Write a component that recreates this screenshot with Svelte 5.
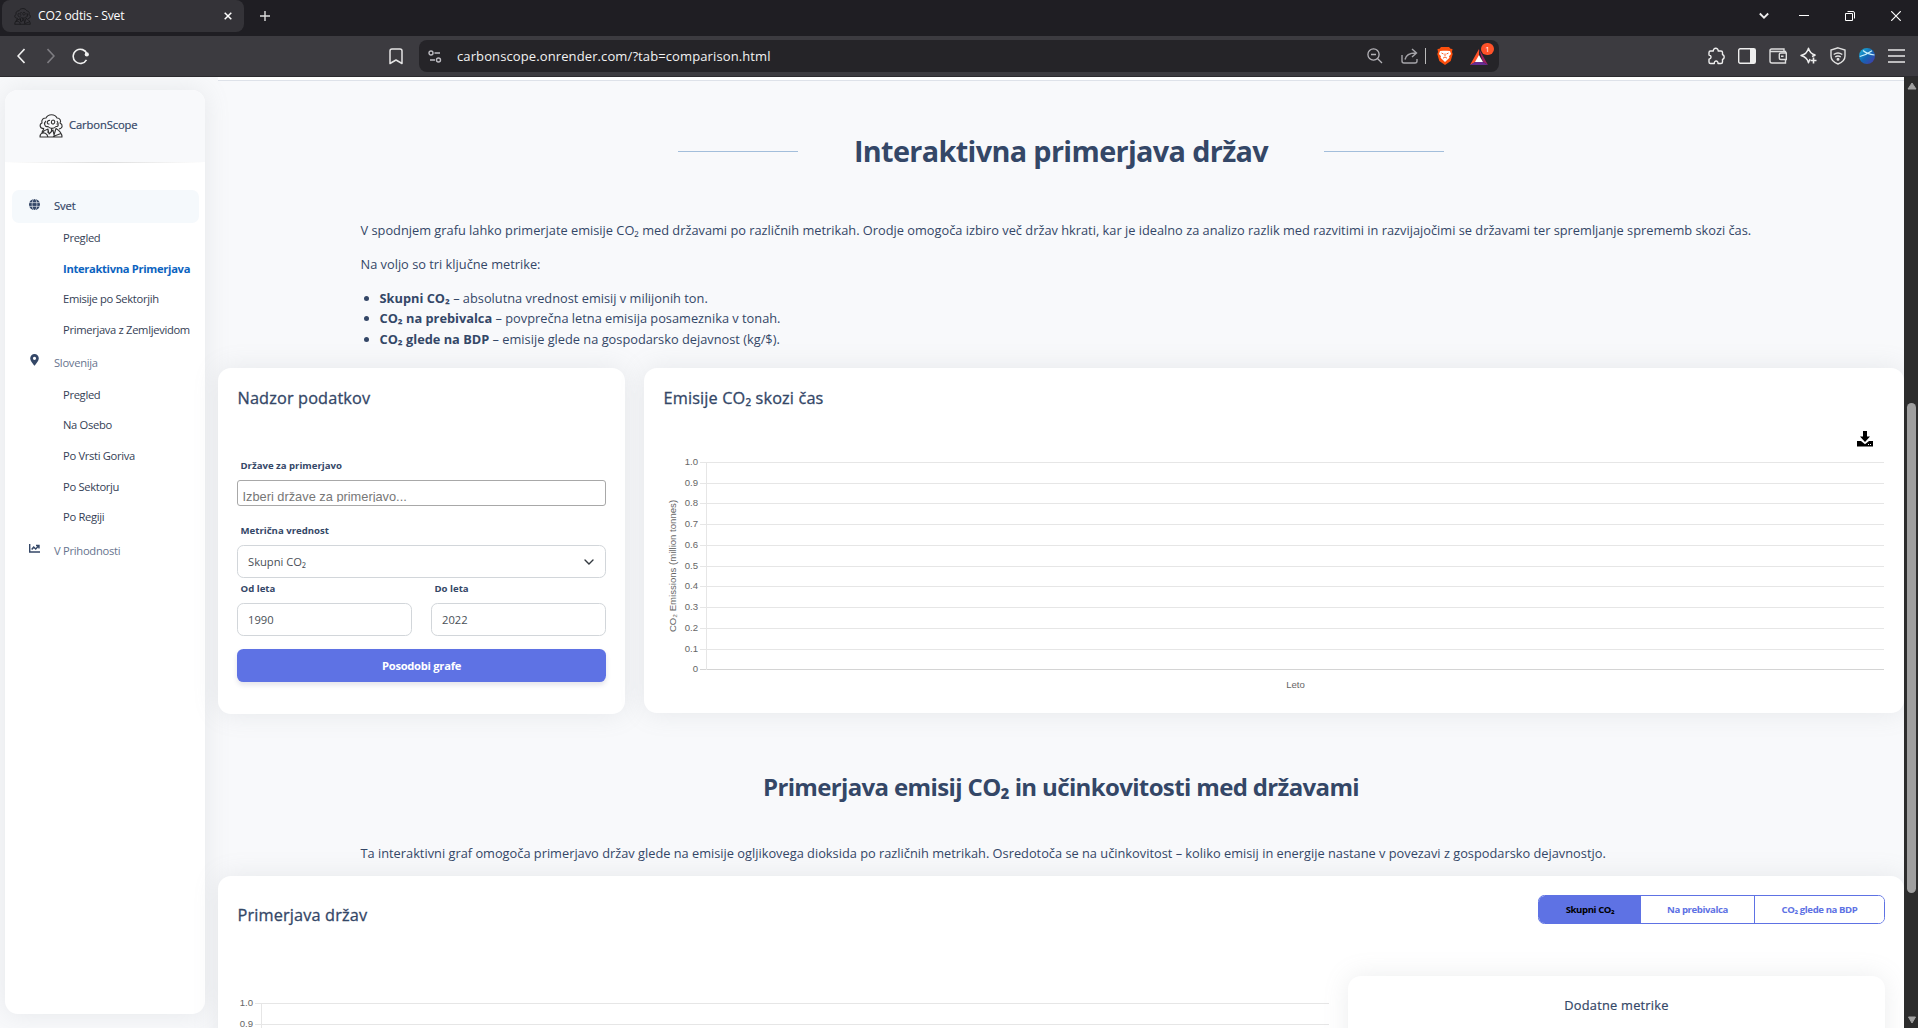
<script>
  const world = ['Pregled', 'Interaktivna Primerjava', 'Emisije po Sektorjih', 'Primerjava z Zemljevidom'];
  const slovenia = ['Pregled', 'Na Osebo', 'Po Vrsti Goriva', 'Po Sektorju', 'Po Regiji'];
  const ticks = [
    ['1.0', 462], ['0.9', 483], ['0.8', 503], ['0.7', 524], ['0.6', 545], ['0.5', 566],
    ['0.4', 586], ['0.3', 607], ['0.2', 628], ['0.1', 649], ['0', 669]
  ].map(([label, y]) => ({ label, y: y - 450 + 0.5 }));
  const ticks2 = [{ label: '1.0', y: 13.5 }, { label: '0.9', y: 34.5 }];
</script>

{#snippet mascot()}
  <g fill="none" stroke="currentColor" stroke-width="1.1" stroke-linejoin="round">
    <path d="M5 14.500C0 14.500 .500 10 3 9C2 5.500 4.500 4 7 4C9 -.300 16 -.300 18 4C21 4 22.500 7 21 9C24 10.500 24 14 20 15" />
    <path d="M7 7C4.500 9 5.500 13.500 9 12.500C11 15 15 15 17 12.500C19.500 13 20 10 18 7" />
    <path d="M11 6.500C8 5.500 7 10.500 10.500 10M14 6C11.500 6.500 12 10.500 14.500 10C16.500 9 16 6 14 6M17.500 10h1.500" />
    <path d="M1 23C1 19 4 17 9 15L10 20L14 16L15 21L17 14.500C21 17 23 19 23 23ZM2 19.500C5 18 8 19 9 23M5 14.500L3 18M9 15V19M12.500 14V18M22 19.500L14 22.500" />
  </g>
{/snippet}

<div class="window">
  <header class="tabs">
    <div class="tab">
      <svg class="favicon" width="17" height="17" viewBox="0 0 24 24">{@render mascot()}</svg>
      <span class="tab-title">CO2 odtis - Svet</span>
      <svg width="8" height="8" viewBox="0 0 8 8"><path d="M.7.7l6.6 6.6M7.3.7L.7 7.3" stroke="#fff" stroke-width="1.5" /></svg>
    </div>
    <svg class="plus" width="10" height="10" viewBox="0 0 10 10"><path d="M5 0v10M0 5h10" stroke="#ddd" stroke-width="1.4" /></svg>
    <div class="controls">
      <svg width="10" height="10" viewBox="0 0 10 10"><path d="M.8 2.5L5 6.7l4.2-4.2" fill="none" stroke="#eee" stroke-width="1.8" /></svg>
      <svg width="10" height="10" viewBox="0 0 10 10"><path d="M0 4.5h10" stroke="#fff" /></svg>
      <svg width="10" height="10" viewBox="0 0 10 10"><path d="M.5 2.5h7v7h-7zM2.5.5H8q1.5 0 1.5 1.5v5.5" fill="none" stroke="#fff" /></svg>
      <svg width="10" height="10" viewBox="0 0 10 10"><path d="M.2.2l9.6 9.6M9.8.2L.2 9.8" stroke="#fff" stroke-width="1.2" /></svg>
    </div>
  </header>

  <div class="toolbar">
    <div class="navbtns">
      <svg width="8" height="16" viewBox="0 0 8 16"><path d="M7.5 1L1 8l6.500 7" fill="none" stroke="#f0f0f0" stroke-width="1.6" /></svg>
      <svg width="8" height="16" viewBox="0 0 8 16"><path d="M.5 1L7 8l-6.500 7" fill="none" stroke="#7e7d82" stroke-width="1.6" /></svg>
      <svg width="18" height="17" viewBox="0 0 18 17"><path d="M14.500 11.800A7.100 7.100 0 1 1 15 6" fill="none" stroke="#f0f0f0" stroke-width="1.6" /><circle cx="14.800" cy="6.400" r="2.100" fill="#f0f0f0" /></svg>
    </div>
    <svg class="bookmark" width="14" height="17" viewBox="0 0 14 17"><path d="M1 3Q1 1 3 1h8q2 0 2 2v12.500L7 12 1 15.500z" fill="none" stroke="#e4e4e4" stroke-width="1.500" stroke-linejoin="round" /></svg>
    <div class="url">
      <svg width="14" height="13" viewBox="0 0 14 13" fill="none" stroke="#bdbcc2" stroke-width="1.400"><circle cx="3" cy="3" r="2" /><path d="M6.500 3H12M2 10h5" /><circle cx="10.500" cy="10" r="2" /></svg>
      <span class="address">carbonscope.onrender.com/?tab=comparison.html</span>
      <div class="urlicons">
        <svg width="16" height="16" viewBox="0 0 16 16" fill="none" stroke="#b4b3b8" stroke-width="1.300"><circle cx="6.500" cy="6.500" r="5.600" /><path d="M10.700 10.700L15 15M4 6.500h5" /></svg>
        <svg width="17" height="16" viewBox="0 0 17 16" fill="none" stroke="#a5a4a9" stroke-width="1.400"><path d="M1 7v6q0 2 2 2h11q2 0 2-2v-2M4 11.500C5 7 8 5 14.500 5M11 1l4.500 4L11 9" /></svg>
        <i class="sep"></i>
        <svg width="16" height="18" viewBox="0 0 16 18"><path d="M4 0h8l1.500 1.800L15.500 2 15 5l.700 2-2 7L8 18 2.300 14 .300 7 1 5 .500 2l2-.200z" fill="#fb4f0d" /><path d="M3 4L6 3.700h4l3 .3 1 3-2 2.300.5 1.500L8 15l-4.500-4.200L4 9.300l-2-2.300z" fill="#fff" /><path d="M4.500 6l2 1M11.500 6l-2 1M8 6.500v2.500M6 11.200L8 10l2 1.200" fill="none" stroke="#fb4f0d" stroke-width=".9" /></svg>
        <div class="rewards">
          <svg width="18" height="16" viewBox="0 0 18 16"><path d="M9 0L0 16l9-5z" fill="#ff5229" /><path d="M9 0l9 16-5-3z" fill="#9e1f63" /><path d="M0 16h18l-5-3H5z" fill="#662d91" /><path d="M9 6l4 7H5z" fill="#fff" /></svg>
          <b class="badge">1</b>
        </div>
      </div>
    </div>
    <div class="extras">
      <svg width="18" height="18" viewBox="0 0 18 18" fill="none" stroke="#eee" stroke-width="1.400" stroke-linejoin="round"><path d="M3.500 4H6.300C6 .300 11.500 .300 11.200 4H14q1.500 0 1.500 1.500V7.500c2.300 1 2.300 4 0 5V15q0 1.500-1.500 1.500H11c.300-3.300-4-3.300-3.700 0H3.500Q2 16.500 2 15V12.200c2.800-.700 2.800-3.700 0-4.200V5.500Q2 4 3.500 4z" /></svg>
      <svg width="18" height="16" viewBox="0 0 18 16"><rect x=".7" y=".7" width="16.600" height="14.600" rx="1.500" fill="none" stroke="#eee" stroke-width="1.400" /><path d="M12 1h5v14h-5z" fill="#eee" /></svg>
      <svg width="18" height="16" viewBox="0 0 18 16" fill="none" stroke="#ddd" stroke-width="1.400"><path d="M16.500 5V3.500H2.500C.500 3.500.500 1 2.500 1H15v2.500M1 2.500V13q0 2 2 2h13.500v-3.500" /><path d="M17.300 5v6.500h-5.500q-1.500 0-1.500-1.500V6.500Q10.300 5 11.800 5zM12 8.300h2.500" /></svg>
      <svg width="18" height="18" viewBox="0 0 18 18" fill="none" stroke="#eee" stroke-width="1.400" stroke-linejoin="round"><path d="M15.500 8Q10 7 8.500 1.200Q7 7 1 8.500Q7 10 8.500 15.800L10 12M15.500 8L12 9.500" /><path d="M13.500 10.500v6M10.500 13.500h6" stroke-width="1.600" /></svg>
      <svg width="16" height="18" viewBox="0 0 16 18" fill="none" stroke="#e0e0e0" stroke-width="1.400"><path d="M8 .8l7 2.200v6c0 4-3 6.500-7 8-4-1.500-7-4-7-8V3z" /><path d="M3.700 7.500q4.300-3 8.600 0M5.200 10q2.800-2 5.600 0" /><circle cx="8" cy="12.300" r=".8" /></svg>
      <svg width="16" height="16" viewBox="0 0 16 16"><defs><linearGradient id="orb" x1="0" y1="0" x2="1" y2="1"><stop offset="0" stop-color="#20b8dc" /><stop offset=".5" stop-color="#1267b4" /><stop offset="1" stop-color="#4a35a8" /></linearGradient></defs><circle cx="8" cy="8" r="8" fill="url(#orb)" /><path d="M.8 8.500Q7 7 13 2.800M4 2.500Q8 6 15.500 7" fill="none" stroke="#c9f0fa" stroke-width="1.200" /></svg>
      <svg width="17" height="14" viewBox="0 0 17 14"><path d="M0 1h17M0 7h17M0 13h17" stroke="#e8e8e8" stroke-width="1.500" /></svg>
    </div>
  </div>

  <div class="viewport">
    <aside class="side-col">
      <nav class="sidebar">
        <div class="brand">
          <svg class="logo" width="24" height="24" viewBox="0 0 24 24">{@render mascot()}</svg>
          <span>CarbonScope</span>
        </div>
        <div class="rule"></div>
        <div class="item active">
          <svg width="11" height="11" viewBox="0 0 11 11"><circle cx="5.500" cy="5.500" r="5.500" fill="#344767" /><path d="M0 3.600h11M0 7.400h11" stroke="#f6f9fc" stroke-width=".6" /><ellipse cx="5.500" cy="5.500" rx="2.400" ry="5.800" fill="none" stroke="#f6f9fc" stroke-width=".6" /></svg>
          <span>Svet</span>
        </div>
        <ul class="sub">
          {#each world as entry, i}<li class:current={i === 1}>{entry}</li>{/each}
        </ul>
        <div class="item">
          <svg width="11" height="12" viewBox="0 0 11 12"><path fill-rule="evenodd" d="M5.500 0a4.300 4.300 0 0 1 4.300 4.300C9.800 7 6.500 10.500 5.500 11.800 4.500 10.500 1.200 7 1.200 4.300A4.300 4.300 0 0 1 5.500 0zm0 2.700a1.600 1.600 0 1 0 0 3.200 1.600 1.600 0 0 0 0-3.200z" fill="#344767" /></svg>
          <span>Slovenija</span>
        </div>
        <ul class="sub second-list">
          {#each slovenia as entry}<li>{entry}</li>{/each}
        </ul>
        <div class="item">
          <svg width="11" height="9" viewBox="0 0 11 9" fill="none" stroke="#344767" stroke-width="1.400"><path d="M.7 0v8H11" /><path d="M2.700 5.500L4.700 3l2 2L9.500 2M7 1.500h3v3" /></svg>
          <span>V Prihodnosti</span>
        </div>
      </nav>
    </aside>

    <main>
      <div class="topline"></div>
      <div class="heading"><i></i><h2>Interaktivna primerjava držav</h2><i></i></div>
      <div class="prose intro">
        <p>V spodnjem grafu lahko primerjate emisije CO₂ med državami po različnih metrikah. Orodje omogoča izbiro več držav hkrati, kar je idealno za analizo razlik med razvitimi in razvijajočimi se državami ter spremljanje sprememb skozi čas.</p>
        <p>Na voljo so tri ključne metrike:</p>
        <ul>
          <li><b>Skupni CO₂</b> – absolutna vrednost emisij v milijonih ton.</li>
          <li><b>CO₂ na prebivalca</b> – povprečna letna emisija posameznika v tonah.</li>
          <li><b>CO₂ glede na BDP</b> – emisije glede na gospodarsko dejavnost (kg/$).</li>
        </ul>
      </div>

      <div class="row">
        <section class="card form">
          <h5>Nadzor podatkov</h5>
          <label class="first" for="countries">Države za primerjavo</label>
          <div class="multi" id="countries"><span>Izberi države za primerjavo...</span></div>
          <label class="second" for="metric">Metrična vrednost</label>
          <div class="field" id="metric"><span>Skupni CO₂</span>
            <svg width="10" height="6" viewBox="0 0 10 6"><path d="M1 1l4 4 4-4" fill="none" stroke="#343a40" stroke-width="1.400" stroke-linecap="round" /></svg>
          </div>
          <div class="years">
            <div><label for="from">Od leta</label><div class="field" id="from">1990</div></div>
            <div><label for="to">Do leta</label><div class="field" id="to">2022</div></div>
          </div>
          <button class="update">Posodobi grafe</button>
        </section>

        <section class="card chart">
          <h5>Emisije CO₂ skozi čas</h5>
          <svg class="download" width="16" height="16" viewBox="0 0 16 16"><path d="M6 0h4v5.500h3L8 11 3 5.500h3z" /><path d="M0 10h4l4 3.300L12 10h4v5.500H0z" /><path d="M11 13.500h1M13 13.500h1" stroke="#fff" /></svg>
          <svg class="plot" width="1222" height="244" viewBox="0 0 1222 244">
            {#each ticks as t}
              <path d="M37 {t.y}H1221" stroke={t.label === '0' ? '#d4d4d4' : '#e6e6e6'} />
              <text x="35" y={t.y + 2.800} text-anchor="end">{t.label}</text>
            {/each}
            <path d="M43.500 12v208" stroke="#e6e6e6" />
            <text class="axis" transform="translate(12.500 116) rotate(-90)" text-anchor="middle">CO₂ Emissions (million tonnes)</text>
            <text class="axis" x="632.500" y="237.500" text-anchor="middle">Leto</text>
          </svg>
        </section>
      </div>

      <h3>Primerjava emisij CO₂ in učinkovitosti med državami</h3>
      <div class="prose second-text">
        <p>Ta interaktivni graf omogoča primerjavo držav glede na emisije ogljikovega dioksida po različnih metrikah. Osredotoča se na učinkovitost – koliko emisij in energije nastane v povezavi z gospodarsko dejavnostjo.</p>
      </div>

      <section class="card compare">
        <div class="compare-head">
          <h5>Primerjava držav</h5>
          <div class="group">
            <button class="on">Skupni CO₂</button>
            <button>Na prebivalca</button>
            <button>CO₂ glede na BDP</button>
          </div>
        </div>
        <div class="compare-body">
          <svg class="plot" width="1093" height="38" viewBox="0 0 1093 38">
            {#each ticks2 as t}
              <path d="M18 {t.y}H1092" stroke="#e6e6e6" />
              <text x="16" y={t.y + 2.800} text-anchor="end">{t.label}</text>
            {/each}
            <path d="M24.500 13v25" stroke="#e6e6e6" />
          </svg>
          <div class="card metrics"><h6>Dodatne metrike</h6></div>
        </div>
      </section>
    </main>

    <div class="scrollbar">
      <svg width="10" height="8" viewBox="0 0 10 8"><path d="M5 1L9 7H1z" fill="#a0a0a0" stroke="#a0a0a0" stroke-linejoin="round" /></svg>
      <div class="thumb"></div>
      <svg class="down" width="10" height="8" viewBox="0 0 10 8"><path d="M5 7L1.500 1h7z" fill="#a0a0a0" stroke="#a0a0a0" stroke-linejoin="round" /></svg>
    </div>
  </div>
</div>

<style>
  :global(body) { margin: 0; overflow: hidden; }
  * { box-sizing: border-box; }
  svg { display: block; flex: none; }
  h2, h3, h5, h6, p, ul { margin: 0; padding: 0; }
  .window { width: 1918px; height: 1028px; overflow: hidden; display: flex; flex-direction: column; font-family: 'Open Sans', sans-serif; color: #344767; white-space: nowrap; }

  .tabs { height: 36px; flex: none; background: #1f1e23; display: flex; align-items: flex-start; padding-left: 2px; }
  .tab { width: 242px; height: 32px; background: #343338; border-radius: 8px; display: flex; align-items: center; padding: 0 12px; color: #fff; }
  .favicon { color: #17171a; }
  .tab-title { flex: 1; margin-left: 7px; font: 12.200px/32px 'Open Sans', sans-serif; letter-spacing: -0.2px; }
  .plus { margin: 11px 0 0 16px; }
  .controls { margin: 11px 17px 0 auto; display: flex; }
  .controls svg { margin-left: 36px; }
  .controls svg:nth-child(2) { margin-left: 30px; }

  .toolbar { height: 41px; flex: none; background: #3c3b40; border-bottom: 1px solid #2b2a2e; display: flex; align-items: center; padding-left: 17px; }
  .navbtns { display: flex; align-items: center; gap: 22px; width: 372px; }
  .navbtns svg:last-child { margin-left: -5px; }
  .url { margin-left: 16px; width: 1080px; height: 32px; background: #252428; border-radius: 8px; display: flex; align-items: center; padding: 0 11px 0 9px; }
  .address { margin-left: 15px; color: #f2f2f2; font: 13px/32px 'Open Sans', sans-serif; letter-spacing: 0.11px; }
  .urlicons { margin-left: auto; display: flex; align-items: center; }
  .urlicons svg:nth-child(2) { margin-left: 18px; }
  .sep { width: 1px; height: 16px; background: #bbb; margin: 0 11px 0 7px; }
  .rewards { position: relative; margin: 2px 0 0 17px; }
  .badge { position: absolute; left: 11px; top: -6px; width: 13px; height: 12px; border-radius: 6px; background: #ff5229; color: #fff; font: 8px/12px 'Open Sans', sans-serif; text-align: center; }
  .extras { margin: 0 13px 0 auto; display: flex; align-items: center; gap: 12.800px; }

  .viewport { flex: 1; min-height: 0; background: #f8f9fb; display: flex; overflow: hidden; }
  .side-col { flex: none; width: 218px; padding: 13px 0 0 5px; }
  .sidebar { width: 200px; height: 924px; border-radius: 13px; background: #fff; box-shadow: 0 0 26px rgba(136, 142, 152, 0.16); overflow: hidden; }
  .brand { height: 72px; background: #f8f9fb; display: flex; align-items: center; padding-left: 34px; font-size: 11.200px; font-weight: 500; letter-spacing: -0.1px; -webkit-text-stroke: 0.2px; }
  .brand span { margin-left: 6px; margin-top: -3px; }
  .logo { color: #333; }
  .rule { height: 1px; background: linear-gradient(90deg, transparent, #dcdcdc, transparent); margin-bottom: 27px; }
  .item { height: 33px; margin: 0 6px 0 7px; padding: 0 0 2px 17px; border-radius: 7px; display: flex; align-items: center; font-size: 11.200px; color: #67748e; letter-spacing: -0.28px; }
  .item svg { margin-top: -3px; }
  .item span { margin: 1px 0 0 14px; }
  .item.active { background: #f5f9fc; color: #344767; font-weight: 500; }
  .item.active span { margin-top: 0; letter-spacing: -0.1px; -webkit-text-stroke: 0.2px; }
  .sub { list-style: none; padding-left: 58px; font-size: 11.200px; color: #343e55; letter-spacing: -0.32px; height: 123px; }
  .sub li { height: 30.600px; line-height: 29.500px; }
  .sub.second-list { padding-top: 0.500px; height: 155px; }
  .second-list li { height: 30.700px; }
  .sub .current { color: #0b63c0; font-weight: 700; letter-spacing: -0.32px; }

  main { width: 1686px; flex: none; display: flex; flex-direction: column; }
  main > * { flex: none; }
  .topline { height: 4px; background: #fff; border-bottom: 1px solid #dee2e9; }
  .heading { height: 141px; display: flex; align-items: center; justify-content: center; gap: 56px; }
  .heading i { width: 120px; height: 1px; background: #a3bedb; }
  h2 { margin-top: -2px; font-size: 28.800px; font-weight: 700; line-height: 40px; letter-spacing: -0.64px; }
  .prose { padding-left: 142.500px; font-size: 12.800px; line-height: 20.500px; }
  .prose p { height: 34px; }
  .intro { height: 148px; margin-top: -2px; }
  .intro ul { padding-left: 19px; margin-top: -0.400px; }

  .row { display: flex; gap: 19px; }
  .card { background: #fff; border-radius: 13px; box-shadow: 0 0 26px rgba(136, 142, 152, 0.16); }
  .form { width: 407px; height: 346px; padding: 20px 19px; }
  h5 { margin-left: 0.500px; font-size: 16.300px; font-weight: 500; line-height: 20px; letter-spacing: 0.14px; -webkit-text-stroke: 0.3px; }
  label { display: block; font-size: 9.600px; font-weight: 700; line-height: 14px; padding-left: 3.500px; }
  .first { margin-top: 51px; }
  .multi { margin-top: 7px; height: 26px; border: 1px solid #a8a8a8; border-radius: 3px; padding: 8px 0 0 4.500px; color: #777; font: 12.800px/16px 'Liberation Sans', Arial, sans-serif; }
  .multi span { display: block; height: 13px; overflow: hidden; }
  .second { margin-top: 18px; }
  .field { height: 33px; margin-top: 7px; border: 1px solid #d2d6da; border-radius: 6.400px; padding: 0 11px 0 10px; display: flex; align-items: center; justify-content: space-between; font-size: 11.200px; color: #495057; }
  .field span { margin-top: -1px; }
  .years { display: grid; grid-template-columns: 1fr 1fr; gap: 19px; margin-top: 4px; }
  button { font-family: inherit; border: 0; padding: 0; }
  .update { display: block; width: 100%; height: 33px; margin-top: 13px; padding-bottom: 1px; border-radius: 6.400px; background: #5e72e4; color: #fff; font-size: 11.200px; font-weight: 700; letter-spacing: -0.28px; box-shadow: 0 3px 5px rgba(50, 50, 93, 0.13); }
  .chart { width: 1260px; height: 345px; padding: 20px 19px; display: flex; flex-direction: column; }
  .download { margin: 23px 12px 0 auto; }
  .plot { margin-top: 3px; overflow: visible; }
  .plot text { font: 9.600px 'Liberation Sans', Arial, sans-serif; fill: #666; }

  h3 { margin-top: 56px; text-align: center; font-size: 24px; font-weight: 700; line-height: 34px; letter-spacing: -0.64px; }
  .second-text { margin-top: 39px; }
  .second-text p { height: 33px; }
  .compare { height: 260px; }
  .compare-head { display: flex; justify-content: space-between; padding: 19px 19px 0; height: 100px; }
  .compare-head h5 { margin-top: 10px; }
  .group { display: flex; height: 29px; width: 347px; border: 1px solid #5e72e4; border-radius: 6.400px; overflow: hidden; }
  .group button { width: 113px; background: #fff; color: #5e72e4; font-size: 9.600px; font-weight: 700; letter-spacing: -0.4px; }
  .group button.on { width: 102px; background: #5e72e4; color: #000; }
  .group button:last-child { flex: 1; border-left: 1px solid #5e72e4; }
  .compare-body { display: flex; padding: 0 19px; justify-content: space-between; align-items: flex-start; }
  .compare-body .plot { margin-top: 14px; }
  .metrics { width: 537px; height: 150px; padding-top: 20px; text-align: center; }
  h6 { font-size: 12.800px; font-weight: 500; line-height: 18px; letter-spacing: 0.24px; -webkit-text-stroke: 0.2px; }

  .scrollbar { flex: none; width: 14px; background: #2c2c2c; display: flex; flex-direction: column; align-items: center; padding: 5px 0 4px 1px; }
  .thumb { width: 9px; height: 490px; margin-top: 313px; border-radius: 5px; background: #9f9f9f; }
  .down { margin-top: auto; }
</style>
